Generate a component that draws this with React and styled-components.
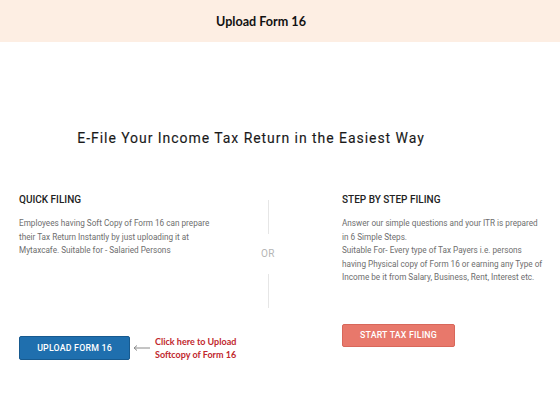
import styled, { createGlobalStyle } from "styled-components";

const GlobalStyle = createGlobalStyle`
  html, body {
    margin: 0;
    padding: 0;
    background: #fff;
  }
  body {
    font-family: Roboto, "Liberation Sans", sans-serif;
  }
`;

const Page = styled.div`
  width: 560px;
  height: 420px;
  overflow: hidden;
  background: #fff;
`;

const TopBar = styled.div`
  height: 42px;
  background: #fdeee3;
  display: flex;
  align-items: center;
  justify-content: center;
  padding-right: 38px;
  font-family: Lato, "Open Sans", sans-serif;
  font-weight: 700;
  font-size: 12.6px;
  color: #111;
`;

const Heading = styled.h1`
  margin: 87px 58px 0 0;
  text-align: center;
  font-family: Roboto, sans-serif;
  font-weight: 400;
  font-size: 14px;
  line-height: 18px;
  letter-spacing: 0.95px;
  color: #1a1a1a;
  -webkit-text-stroke: 0.12px #1a1a1a;
`;

const Columns = styled.div`
  display: grid;
  grid-template-columns: 230px 38px 1fr;
  padding-left: 19px;
  margin-top: 46px;
`;

const Column = styled.div`
  display: flex;
  flex-direction: column;
  align-items: flex-start;
  padding-left: ${(p) => p.$indent || 0}px;
`;

const ColTitle = styled.h2`
  margin: 0;
  font-size: 10px;
  line-height: 14px;
  font-weight: 500;
  color: #222;
`;

const Body = styled.p`
  margin: 10px 0 0;
  font-size: 8.2px;
  line-height: 13.5px;
  color: #6e6e6e;
  white-space: nowrap;
`;

const Divider = styled.div`
  display: flex;
  flex-direction: column;
  align-items: center;
  padding-top: 7px;
`;

const Rule = styled.div`
  width: 1px;
  height: 34px;
  background: #e6e6e6;
`;

const Or = styled.span`
  margin: 12px 0;
  font-size: 10px;
  line-height: 16px;
  color: #b5b5b5;
  letter-spacing: 0.5px;
`;

const ActionRow = styled.div`
  display: flex;
  align-items: center;
  margin-top: ${(p) => p.$gap}px;
`;

const Button = styled.button`
  width: ${(p) => p.$width}px;
  height: ${(p) => p.$height}px;
  border-radius: 2px;
  border: 1px solid ${(p) => p.$border};
  background: ${(p) => p.$bg};
  color: #fff;
  font-family: Roboto, sans-serif;
  font-size: 8.8px;
  font-weight: 500;
  letter-spacing: 0.2px;
  padding: 0;
  cursor: pointer;
`;

const Hint = styled.div`
  display: flex;
  align-items: center;
  margin-left: 3px;
  gap: 4px;
`;

const HintText = styled.div`
  font-family: Lato, "Open Sans", sans-serif;
  font-weight: 700;
  font-size: 9px;
  line-height: 13px;
  color: #c1272d;
  margin-top: -1px;
`;

export default function App() {
  return (
    <Page>
      <GlobalStyle />
      <TopBar>Upload Form 16</TopBar>
      <Heading>E-File Your Income Tax Return in the Easiest Way</Heading>
      <Columns>
        <Column>
          <ColTitle>QUICK FILING</ColTitle>
          <Body>
            Employees having Soft Copy of Form 16 can prepare
            <br />
            their Tax Return Instantly by just uploading it at
            <br />
            Mytaxcafe. Suitable for - Salaried Persons
          </Body>
          <ActionRow $gap={78}>
            <Button $width={111} $height={24} $bg="#1f6fae" $border="#175a8f">
              UPLOAD FORM 16
            </Button>
            <Hint>
              <svg width="18" height="6" viewBox="0 0 18 6">
                <line x1="1" y1="3" x2="17" y2="3" stroke="#8a8a8a" strokeWidth="1" />
                <path d="M4 0.5 L1 3 L4 5.5" fill="none" stroke="#8a8a8a" strokeWidth="1" />
              </svg>
              <HintText>
                Click here to Upload
                <br />
                Softcopy of Form 16
              </HintText>
            </Hint>
          </ActionRow>
        </Column>
        <Divider>
          <Rule />
          <Or>OR</Or>
          <Rule />
        </Divider>
        <Column $indent={55}>
          <ColTitle>STEP BY STEP FILING</ColTitle>
          <Body>
            Answer our simple questions and your ITR is prepared
            <br />
            in 6 Simple Steps.
            <br />
            Suitable For- Every type of Tax Payers i.e. persons
            <br />
            having Physical copy of Form 16 or earning any Type of
            <br />
            Income be it from Salary, Business, Rent, Interest etc.
          </Body>
          <ActionRow $gap={39}>
            <Button $width={113} $height={23} $bg="#e8786b" $border="#d8675a">
              START TAX FILING
            </Button>
          </ActionRow>
        </Column>
      </Columns>
    </Page>
  );
}
